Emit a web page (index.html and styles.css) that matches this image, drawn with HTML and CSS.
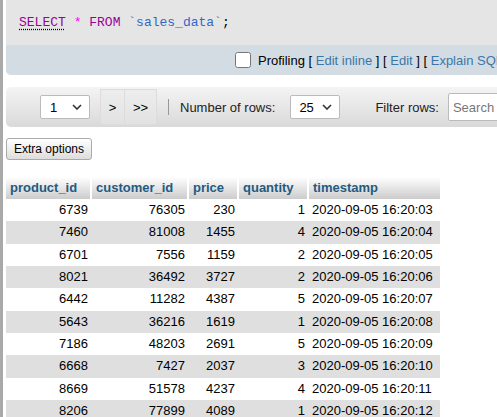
FILE: index.html
```html
<!DOCTYPE html>
<html>
<head>
<meta charset="utf-8">
<link rel="stylesheet" href="styles.css">
</head>
<body>
<div class="frame">
  <div class="sqlbox">
    <div class="sqlcode"><span class="kw kw-u">SELECT</span> <span class="star">*</span> <span class="kw">FROM</span> <span class="ident">`sales_data`</span>;</div>
    <div class="sqltools">
      <input type="checkbox" class="chk">
      <span class="tooltext">Profiling [ <a class="lnk">Edit inline</a> ] [ <a class="lnk">Edit</a> ] [ <a class="lnk">Explain SQL</a> ]</span>
    </div>
  </div>

  <div class="navbar">
    <div class="sel sel-page"><span>1</span><svg class="chev" viewBox="0 0 10 6" width="10" height="6"><path d="M1 1 L5 5 L9 1" fill="none" stroke="#333" stroke-width="1.6"/></svg></div>
    <div class="navbtns">
      <span class="nbtn">&gt;</span>
      <span class="nbtn nbtn2">&gt;&gt;</span>
    </div>
    <span class="sep"></span>
    <span class="lbl">Number of rows:</span>
    <div class="sel sel-rows"><span>25</span><svg class="chev" viewBox="0 0 10 6" width="10" height="6"><path d="M1 1 L5 5 L9 1" fill="none" stroke="#333" stroke-width="1.6"/></svg></div>
    <span class="lbl lbl-filter">Filter rows:</span>
    <div class="search">Search this table</div>
  </div>

  <div class="extra"><span class="btn">Extra options</span></div>

  <table class="data">
    <thead>
      <tr><th class="c1">product_id</th><th class="c2">customer_id</th><th class="c3">price</th><th class="c4">quantity</th><th class="c5">timestamp</th></tr>
    </thead>
    <tbody>
      <tr><td>6739</td><td>76305</td><td>230</td><td>1</td><td class="ts">2020-09-05 16:20:03</td></tr>
      <tr><td>7460</td><td>81008</td><td>1455</td><td>4</td><td class="ts">2020-09-05 16:20:04</td></tr>
      <tr><td>6701</td><td>7556</td><td>1159</td><td>2</td><td class="ts">2020-09-05 16:20:05</td></tr>
      <tr><td>8021</td><td>36492</td><td>3727</td><td>2</td><td class="ts">2020-09-05 16:20:06</td></tr>
      <tr><td>6442</td><td>11282</td><td>4387</td><td>5</td><td class="ts">2020-09-05 16:20:07</td></tr>
      <tr><td>5643</td><td>36216</td><td>1619</td><td>1</td><td class="ts">2020-09-05 16:20:08</td></tr>
      <tr><td>7186</td><td>48203</td><td>2691</td><td>5</td><td class="ts">2020-09-05 16:20:09</td></tr>
      <tr><td>6668</td><td>7427</td><td>2037</td><td>3</td><td class="ts">2020-09-05 16:20:10</td></tr>
      <tr><td>8669</td><td>51578</td><td>4237</td><td>4</td><td class="ts">2020-09-05 16:20:11</td></tr>
      <tr><td>8206</td><td>77899</td><td>4089</td><td>1</td><td class="ts">2020-09-05 16:20:12</td></tr>
    </tbody>
  </table>
</div>
</body>
</html>
```

FILE: styles.css
```css
html, body {
  margin: 0;
  padding: 0;
  background: #fff;
  overflow: hidden;
}
body {
  font-family: "Liberation Sans", Arial, sans-serif;
  font-size: 13px;
  color: #000;
}
.frame {
  border-left: 3px solid #a9a9a9;
  padding-left: 3px;
  min-height: 417px;
  box-sizing: border-box;
}
.sqlbox {
  background: #e5e5e5;
  border-radius: 0 0 0 5px;
  overflow: hidden;
}
.sqlcode {
  font-family: "Liberation Mono", "DejaVu Sans Mono", monospace;
  font-size: 13px;
  line-height: 19px;
  padding: 13px 13px 13px 13px;
  white-space: nowrap;
  color: #000;
}
.kw { color: #909; }
.kw-u { text-decoration: underline dotted #000; text-underline-offset: 3px; }
.star { color: #f0f; }
.ident { color: #36c; }
.sqltools {
  background: #d3dce3;
  height: 30px;
  display: flex;
  align-items: center;
  padding-left: 229px;
  white-space: nowrap;
  overflow: hidden;
}
.sqltools > * { flex-shrink: 0; }
.chk {
  margin: 0 7px 0 0;
  width: 16px;
  height: 16px;
}
.tooltext { color: #000; }
.lnk { color: #3a77a8; }

.navbar {
  margin-top: 12px;
  height: 40px;
  background: linear-gradient(#f4f4f4, #d9d9d9);
  border-radius: 5px 0 0 5px;
  display: flex;
  align-items: center;
  white-space: nowrap;
  overflow: hidden;
}
.navbar > * { flex-shrink: 0; }
.sel {
  height: 24px;
  box-sizing: border-box;
  background: #fff;
  border: 1px solid #bbb;
  border-radius: 2px;
  display: flex;
  align-items: center;
  justify-content: space-between;
  padding: 0 7px 0 9px;
  font-size: 13px;
}
.sel-page { margin-left: 34px; width: 50px; }
.sel-rows { width: 50px; margin-left: 15px; padding-left: 8px; }
.navbtns {
  display: flex;
  height: 36px;
  margin-left: 10px;
}
.nbtn {
  display: flex;
  align-items: center;
  justify-content: center;
  width: 25px;
  height: 36px;
  background: linear-gradient(#ededed, #e2e2e2);
  border: 1px solid #dcdcdc;
  box-sizing: border-box;
  font-size: 13px;
}
.nbtn2 { width: 32px; border-left: none; }
.sep {
  width: 1px;
  height: 16px;
  background: #999;
  margin-left: 11px;
}
.lbl { margin-left: 11px; color: #222; }
.lbl-filter { margin-left: 35px; }
.search {
  margin-left: 9px;
  height: 28px;
  box-sizing: border-box;
  border: 1px solid #bbb;
  border-radius: 2px;
  background: #fff;
  color: #777;
  padding: 0 4px;
  display: flex;
  align-items: center;
  width: 140px;
}

.extra {
  margin-top: 11px;
  display: flex;
}
.btn {
  display: inline-flex;
  align-items: center;
  height: 22px;
  box-sizing: border-box;
  padding: 0 7px;
  border: 1px solid #aaa;
  border-radius: 3px;
  background: linear-gradient(#fff, #ddd);
  font-size: 12px;
  color: #000;
}

.data {
  margin-top: 17px;
  border-collapse: separate;
  border-spacing: 0;
}
.data th {
  height: 22px;
  padding: 0 4px;
  text-align: left;
  font-weight: bold;
  color: #235a81;
  background: linear-gradient(#fff, #ccc);
  border-right: 2px solid #fff;
  box-sizing: border-box;
  line-height: 16px;
}
.data th.c5 { border-right: none; }
.c1 { width: 86px; }
.c2 { width: 97px; }
.c3 { width: 50px; }
.c4 { width: 70px; }
.c5 { width: 131px; }
.data td {
  height: 22.33px;
  padding: 0 4px 0 4px;
  text-align: right;
  line-height: 16px;
  box-sizing: border-box;
}
.data td.ts { text-align: left; padding-left: 3px; }
.data tbody tr:nth-child(even) td { background: #dfdfdf; }
.data tbody tr:nth-child(odd) td { background: #fff; }
```
